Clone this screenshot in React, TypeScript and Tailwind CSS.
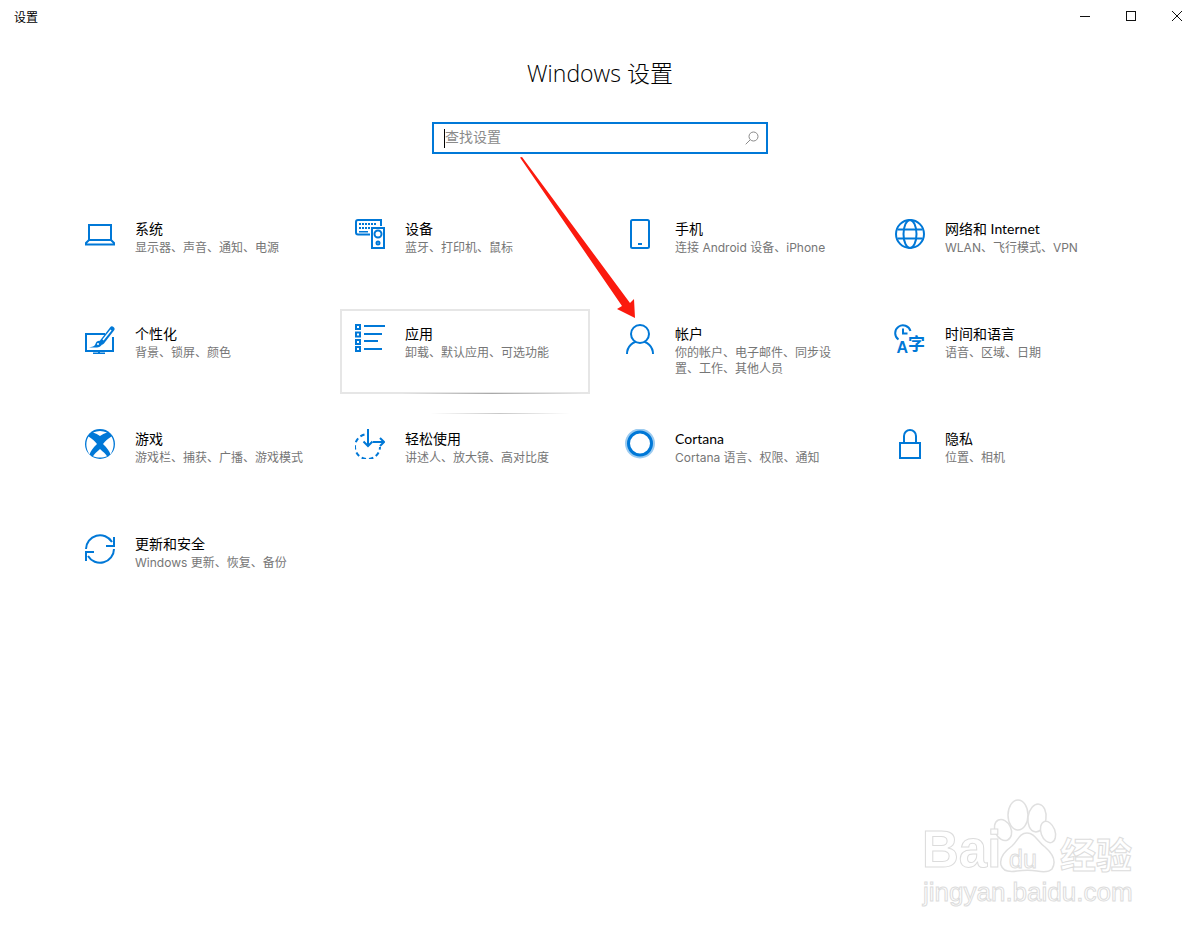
const BLUE = '#0078d7';

function Laptop() {
  return (
    <svg width="30" height="30" viewBox="0 0 30 30" fill="none" stroke={BLUE} strokeWidth="2">
      <path d="M4 21V6h22v15" />
      <path d="M4 21h22l3 3v1.500H1V24z" />
    </svg>
  );
}

function Devices() {
  const keys = [4, 7, 10, 13, 16, 19];
  return (
    <svg width="30" height="30" viewBox="0 0 30 30" fill="none" stroke={BLUE} strokeWidth="2">
      <path d="M15 15.500H3a2 2 0 0 1-2-2V3a2 2 0 0 1 2-2h23v6" />
      {keys.map((x) => (
        <rect key={x} x={x} y="4" width="2" height="2" fill={BLUE} stroke="none" />
      ))}
      {keys.slice(0, 4).map((x) => (
        <rect key={x} x={x} y="8" width="2" height="2" fill={BLUE} stroke="none" />
      ))}
      <rect x="4" y="12" width="9" height="1.500" fill={BLUE} stroke="none" />
      <rect x="17" y="9" width="12" height="20" />
      <circle cx="23" cy="15" r="3.500" />
      <circle cx="23" cy="24" r="1.500" />
    </svg>
  );
}

function Phone() {
  return (
    <svg width="30" height="30" viewBox="0 0 30 30" fill="none" stroke={BLUE} strokeWidth="2">
      <rect x="6" y="1" width="18" height="28" rx="1.500" />
      <rect x="13" y="24" width="4" height="2" fill={BLUE} stroke="none" />
    </svg>
  );
}

function Globe() {
  return (
    <svg width="30" height="30" viewBox="0 0 30 30" fill="none" stroke={BLUE} strokeWidth="2">
      <circle cx="15" cy="15" r="14" />
      <ellipse cx="15" cy="15" rx="6.500" ry="14" />
      <path d="M2.500 10.500h25M2.500 19.500h25" />
    </svg>
  );
}

function Brush() {
  return (
    <svg width="30" height="30" viewBox="0 0 30 30" fill="none" stroke={BLUE} strokeWidth="2">
      <path d="M20 10H1v17h27V13" />
      <path d="M14 27v3M8 29.500h12" />
      <path d="M17 18L27 5" stroke={BLUE} strokeWidth="5" strokeLinecap="round" />
      <path d="M18 16l8-10" stroke="white" strokeWidth="1.500" />
      <path d="M4 23.500h7c3 0 6-1.500 6-4s-3-3.500-5-2-1 4-4 5z" fill={BLUE} stroke="none" />
      <circle cx="13" cy="20" r="1" fill="white" stroke="none" />
    </svg>
  );
}

function Apps() {
  return (
    <svg width="30" height="30" viewBox="0 0 30 30" fill="none">
      {[0, 7.500, 15, 22].map((y) => (
        <g key={y}>
          <rect x="0" y={y} width="6" height="6" fill={BLUE} />
          <rect x="2" y={y + 2} width="2" height="2" fill="white" />
        </g>
      ))}
      <path d="M9 2h21M9 10h18M9 17h14M9 25h18" stroke={BLUE} strokeWidth="2" />
    </svg>
  );
}

function Person() {
  return (
    <svg width="30" height="30" viewBox="0 0 30 30" fill="none" stroke={BLUE} strokeWidth="2">
      <path d="M2 30a13 13 0 0 1 26 0" />
      <circle cx="15" cy="10" r="9" fill="white" />
    </svg>
  );
}

function TimeLang() {
  return (
    <svg width="30" height="30" viewBox="0 0 30 30" fill="none" className="overflow-visible">
      <path d="M3.500 15.500A7.800 7.800 0 1 1 15.500 7" stroke={BLUE} strokeWidth="2" />
      <path d="M8 4.500v5h4.500" stroke={BLUE} strokeWidth="2" />
      <text x="1.500" y="29" fontSize="16" fontWeight="700" fill={BLUE} fontFamily="'Liberation Sans', sans-serif">A</text>
      <text x="13" y="26" fontSize="17" fontWeight="700" fill={BLUE} fontFamily="'Noto Sans CJK SC', sans-serif">字</text>
    </svg>
  );
}

function Xbox() {
  return (
    <svg width="30" height="30" viewBox="0 0 30 30" fill="none">
      <circle cx="15" cy="15" r="15" fill={BLUE} />
      <path d="M8 3.500Q15 .5 22 3.500 18 4.500 15 7 12 4.500 8 3.500z" fill="white" />
      <path d="M3.500 7.500C7 9.500 10 12.500 12 15 8 19 5.500 22 4.500 25.500 .5 19 .5 12.500 3.500 7.500z" fill="white" />
      <path d="M26.500 7.500C23 9.500 20 12.500 18 15 22 19 24.500 22 25.500 25.500 29.500 19 29.500 12.500 26.500 7.500z" fill="white" />
      <path d="M15 20C11.500 23 9 25.500 8 27.200 12 29 18 29 22 27.200 21 25.500 18.500 23 15 20z" fill="white" />
    </svg>
  );
}

function Ease() {
  return (
    <svg width="30" height="30" viewBox="0 0 30 30" fill="none" stroke={BLUE} strokeWidth="2">
      <path d="M9.500 5.500A12.500 12.500 0 1 0 25 18" strokeDasharray="4.500 3" />
      <path d="M13 0v17M8.500 12.500L13 17l4.500-4.500" />
      <path d="M18 13h11M25 9l4 4-4 4" />
    </svg>
  );
}

function CortanaRing() {
  return (
    <svg width="30" height="30" viewBox="0 0 30 30" fill="none">
      <circle cx="15" cy="14.500" r="13.500" stroke="#9ccbf0" strokeWidth="3" />
      <circle cx="15" cy="14.500" r="11.500" stroke={BLUE} strokeWidth="3" />
    </svg>
  );
}

function Lock() {
  return (
    <svg width="30" height="30" viewBox="0 0 30 30" fill="none" stroke={BLUE} strokeWidth="2">
      <rect x="5" y="14" width="20" height="15" />
      <path d="M9 14V7a6 6 0 0 1 12 0v7" />
    </svg>
  );
}

function Sync() {
  return (
    <svg width="30" height="30" viewBox="0 0 30 30" fill="none" stroke={BLUE} strokeWidth="2">
      <path d="M1 15A14 14 0 0 1 27 8" />
      <path d="M29 15A14 14 0 0 1 3 22" />
      <path d="M29 3v9h-8M1 27v-9h8" />
    </svg>
  );
}

const tiles = [
  { title: '系统', desc: '显示器、声音、通知、电源', Icon: Laptop },
  { title: '设备', desc: '蓝牙、打印机、鼠标', Icon: Devices },
  { title: '手机', desc: '连接 Android 设备、iPhone', Icon: Phone },
  { title: '网络和 Internet', desc: 'WLAN、飞行模式、VPN', Icon: Globe },
  { title: '个性化', desc: '背景、锁屏、颜色', Icon: Brush },
  { title: '应用', desc: '卸载、默认应用、可选功能', Icon: Apps, hovered: true },
  { title: '帐户', desc: '你的帐户、电子邮件、同步设\n置、工作、其他人员', Icon: Person },
  { title: '时间和语言', desc: '语音、区域、日期', Icon: TimeLang },
  { title: '游戏', desc: '游戏栏、捕获、广播、游戏模式', Icon: Xbox },
  { title: '轻松使用', desc: '讲述人、放大镜、高对比度', Icon: Ease },
  { title: 'Cortana', desc: 'Cortana 语言、权限、通知', Icon: CortanaRing },
  { title: '隐私', desc: '位置、相机', Icon: Lock },
  { title: '更新和安全', desc: 'Windows 更新、恢复、备份', Icon: Sync },
];

function Tile({ title, desc, Icon, hovered }: { title: string; desc: string; Icon: () => React.ReactElement; hovered?: boolean }) {
  return (
    <div className={`relative flex h-[85px] gap-5 border-2 p-[13px] ${hovered ? 'border-[#e6e6e6]' : 'border-transparent'}`}>
      <div className="h-[30px] w-[30px] shrink-0">
        <Icon />
      </div>
      <div className="w-[175px]">
        <div className="font-['Lato','Noto_Sans_CJK_SC',sans-serif] text-[14px] leading-[20px] text-black">{title}</div>
        <div className="mt-[1px] whitespace-pre-line font-['Inter','Noto_Sans_CJK_SC',sans-serif] text-[12px] leading-[16px] text-[#767676]">{desc}</div>
      </div>
      {hovered && (
        <>
          <div className="absolute -bottom-[2px] left-[60px] h-[1px] w-[180px] bg-gradient-to-r from-transparent via-[#a8a8a8] to-transparent" />
          <div className="absolute -bottom-[22px] left-[88px] h-[1px] w-[140px] bg-gradient-to-r from-transparent via-[#c8c8c8] to-transparent" />
        </>
      )}
    </div>
  );
}

function Watermark() {
  const outline = 'absolute text-white [-webkit-text-stroke:1px_#dcdcdc] whitespace-nowrap';
  return (
    <div className="absolute left-[900px] top-[795px] h-[120px] w-[250px]">
      <svg className="absolute left-0 top-0" width="250" height="90" viewBox="0 0 250 90" fill="white" stroke="#e0e0e0" strokeWidth="1.500">
        <ellipse cx="118" cy="20" rx="10" ry="15" />
        <ellipse cx="137" cy="23" rx="9" ry="14" transform="rotate(8 137 23)" />
        <ellipse cx="103" cy="35" rx="8" ry="11" transform="rotate(-25 103 35)" />
        <ellipse cx="148" cy="37" rx="7" ry="11" transform="rotate(-20 148 37)" />
        <path d="M127 38c8 0 10 8 18 14 8 7 12 14 7 22-4 4-10 3-15 2-6-1-13-1-20 0-6 1-14 1-16-6-2-8 4-14 11-19 6-5 7-13 15-13z" />
      </svg>
      <span className={`${outline} left-[22px] top-[25px] font-['Liberation_Sans'] text-[51px] font-bold leading-[60px]`}>Bai</span>
      <span className={`${outline} left-[109px] top-[50px] font-['Liberation_Sans'] text-[25px] leading-[28px]`}>du</span>
      <span className={`${outline} left-[160px] top-[36px] font-['Noto_Sans_CJK_SC'] text-[36px] font-bold leading-[44px]`}>经验</span>
      <span className={`${outline} left-[23px] top-[81px] font-['Liberation_Sans'] text-[26px] leading-[32px]`}>jingyan.baidu.com</span>
    </div>
  );
}

export default function App() {
  return (
    <div className="relative h-[932px] w-[1200px] overflow-hidden bg-white font-['Open_Sans','Noto_Sans_CJK_SC',sans-serif]">
      <div className="flex h-[32px] items-center justify-between pl-[14px]">
        <span className="mt-[3px] text-[12px] text-black">设置</span>
        <div className="flex h-full">
          {[
            <path key="min" d="M0 5.500h10" />,
            <rect key="max" x="0.500" y="0.500" width="9" height="9" />,
            <path key="close" d="M0 0l10 10M10 0L0 10" />,
          ].map((shape, i) => (
            <div key={i} className="flex h-full w-[46px] items-center justify-center">
              <svg width="10" height="10" viewBox="0 0 10 10" fill="none" stroke="#111" strokeWidth="1">
                {shape}
              </svg>
            </div>
          ))}
        </div>
      </div>

      <h1 className="mt-[24px] text-center text-[23px] font-light leading-[34px] text-black">Windows 设置</h1>

      <div className="mx-auto mt-[32px] flex h-[32px] w-[336px] items-center border-2 border-[#0078d7] pl-[10px] pr-[6px]">
        <span className="h-[19px] w-[1px] bg-black" />
        <span className="flex-1 pb-[4px] text-[14px] text-[#8a8a8a]">查找设置</span>
        <svg width="14" height="14" viewBox="0 0 14 14" fill="none" stroke="#8a8a8a" strokeWidth="1" className="mr-[1px]">
          <circle cx="8.500" cy="5.500" r="4.500" />
          <path d="M5.200 8.800L0.700 13.300" />
        </svg>
      </div>

      <div className="ml-[70px] mt-[50px] grid w-[1060px] grid-cols-[repeat(4,250px)] gap-x-[20px] gap-y-[20px]">
        {tiles.map((t) => (
          <Tile key={t.title} {...t} />
        ))}
      </div>

      <svg className="absolute left-0 top-0" width="1200" height="932" fill="#fb1a0e">
        <polygon points="520,157.500 522,157 630,303 634,299 635,318 617,309 622,306" />
      </svg>

      <Watermark />
    </div>
  );
}
